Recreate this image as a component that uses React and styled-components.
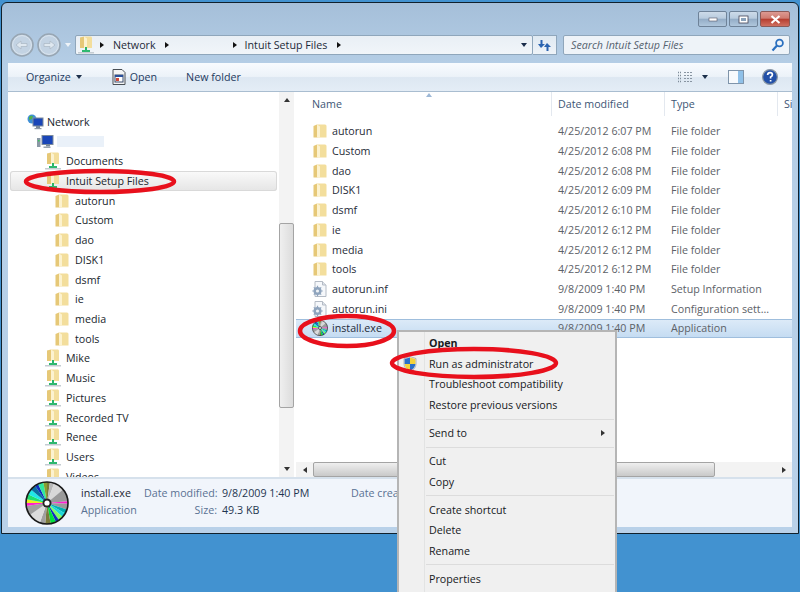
import React from 'react';
import styled, { createGlobalStyle } from 'styled-components';

const Global = createGlobalStyle`
  html, body {
    margin: 0;
    padding: 0;
    height: 592px;
    overflow: hidden;
    background: #4292d0;
    font-family: "Open Sans", "Noto Sans", sans-serif;
    font-size: 10.7px;
    color: #1e2a3a;
  }
`;

const Desktop = styled.div`
  position: relative;
  width: 800px;
  height: 592px;
  padding: 2px 0 0 1px;
  box-sizing: border-box;
  overflow: hidden;
`;

const Window = styled.div`
  width: 798px;
  height: 532px;
  box-sizing: border-box;
  border: 1px solid #10202c;
  border-radius: 6px 6px 0 0;
  padding: 0 6px 6px 6px;
  display: flex;
  flex-direction: column;
  background: linear-gradient(180deg, #a5bfd9 0%, #b5cee6 12%, #b9d1e9 100%);
`;

const TitleBar = styled.div`
  height: 27px;
  display: flex;
  justify-content: flex-end;
  align-items: flex-start;
  padding: 8px 2px 0 0;
  gap: 2px;
  box-sizing: border-box;
  flex: none;
`;

const Caption = styled.div`
  width: ${(p) => (p.$close ? 30 : 29)}px;
  height: 16px;
  border: 1px solid ${(p) => (p.$close ? '#8a5a58' : '#6e8298')};
  border-radius: 2px;
  box-sizing: border-box;
  display: flex;
  align-items: center;
  justify-content: center;
  background: ${(p) =>
    p.$close
      ? 'linear-gradient(180deg, #dc9a92 0%, #cf7b70 45%, #b53d2f 50%, #cf6f60 100%)'
      : 'linear-gradient(180deg, #cddbe9 0%, #b8cbde 45%, #93acc6 50%, #afc6dc 100%)'};
`;

const NavBar = styled.div`
  height: 30px;
  display: flex;
  align-items: center;
  flex: none;
`;

const NavButtons = styled.div`
  display: flex;
  align-items: center;
  width: 65px;
  margin-left: 2px;
  flex: none;
`;

const AddressBox = styled.div`
  width: 458px;
  height: 20px;
  box-sizing: border-box;
  border: 1px solid #8fa6bb;
  border-radius: 2px;
  background: linear-gradient(180deg, #e9eff5, #f1f5f9);
  display: flex;
  align-items: center;
  padding: 0 5px 0 2px;
  flex: none;
`;

const Crumb = styled.span`
  color: #1d2a38;
  white-space: nowrap;
  margin-left: ${(p) => p.$gap || 0}px;
`;

const Chevron = styled.i`
  display: inline-block;
  width: 0;
  height: 0;
  border-left: 4px solid #111;
  border-top: 3.5px solid transparent;
  border-bottom: 3.5px solid transparent;
  margin-left: ${(p) => p.$gap || 0}px;
`;

const DropCaret = styled.i`
  display: inline-block;
  width: 0;
  height: 0;
  border-top: 4px solid ${(p) => p.$color || '#1c2f4a'};
  border-left: 3.5px solid transparent;
  border-right: 3.5px solid transparent;
  margin-left: ${(p) => p.$gap || 0}px;
`;

const AddressCaret = styled(DropCaret)`
  margin-left: auto;
`;

const RefreshBox = styled.div`
  width: 24px;
  height: 20px;
  box-sizing: border-box;
  border: 1px solid #8fa6bb;
  border-left: 0;
  background: linear-gradient(180deg, #dfe9f2, #eef3f8);
  display: flex;
  align-items: center;
  justify-content: center;
  flex: none;
`;

const SearchBox = styled.div`
  width: 227px;
  height: 20px;
  margin-left: 6px;
  box-sizing: border-box;
  border: 1px solid #8fa6bb;
  border-radius: 2px;
  background: #eef3f8;
  color: #55626f;
  font-style: italic;
  white-space: nowrap;
  display: flex;
  align-items: center;
  justify-content: space-between;
  padding: 0 4px 0 7px;
  flex: none;
`;

const Toolbar = styled.div`
  height: 29px;
  flex: none;
  margin-top: 3px;
  box-sizing: border-box;
  border-bottom: 1px solid #a9bdd0;
  background: linear-gradient(180deg, #f8fbfe 0%, #ecf2f9 48%, #dde7f2 52%, #e4edf6 100%);
  display: flex;
  align-items: center;
  padding: 0 14px 0 18px;
  color: #1e3a5f;
  white-space: nowrap;
`;

const ToolItem = styled.div`
  display: flex;
  align-items: center;
  gap: ${(p) => p.$gap || 0}px;
  margin-left: ${(p) => (p.$auto ? 'auto' : `${p.$left || 0}px`)};
`;

const Main = styled.div`
  flex: 1;
  min-height: 0;
  display: flex;
  background: #fff;
  overflow: hidden;
`;

const TreePane = styled.div`
  width: 271px;
  flex: none;
  padding: 20px 2px 0 2px;
  box-sizing: border-box;
  overflow: hidden;
`;

const TreeRow = styled.div`
  height: 19.72px;
  display: flex;
  align-items: center;
  padding-left: ${(p) => p.$indent}px;
  gap: ${(p) => p.$gap || 5}px;
  box-sizing: border-box;
  white-space: nowrap;
  color: #20262d;
  ${(p) =>
    p.$active &&
    `
    box-shadow: inset 0 0 0 1px #d9d9d9;
    border-radius: 3px;
    background: linear-gradient(180deg, #fafafa, #e5e5e5);
  `}
`;

const Hidden = styled.div`
  width: 47px;
  height: 11px;
  background: #eaf1f9;
`;

const VScroll = styled.div`
  width: 15px;
  flex: none;
  background: #f3f3f3;
  display: flex;
  flex-direction: column;
  align-items: center;
  justify-content: space-between;
  padding: 6px 0;
  box-sizing: border-box;
  position: relative;
`;

const VThumb = styled.div`
  position: absolute;
  top: 131px;
  left: 0;
  width: 15px;
  height: 185px;
  box-sizing: border-box;
  border: 1px solid #a4a4a4;
  border-radius: 2px;
  background: linear-gradient(90deg, #efefef, #dcdcdc);
`;

const ListPane = styled.div`
  flex: 1;
  min-width: 0;
  margin-left: 2px;
  display: flex;
  flex-direction: column;
  position: relative;
`;

const HeaderRow = styled.div`
  height: 24px;
  flex: none;
  display: flex;
  color: #3d5675;
  position: relative;
`;

const HeaderCell = styled.div`
  width: ${(p) => p.$w}px;
  padding-left: ${(p) => p.$pad}px;
  box-sizing: border-box;
  display: flex;
  align-items: center;
  flex: none;
  border-right: ${(p) => (p.$last ? '0' : '1px solid #e3e8ef')};
  white-space: nowrap;
`;

const SortMark = styled.i`
  position: absolute;
  left: 130px;
  top: 1px;
  width: 0;
  height: 0;
  border-bottom: 4px solid #9db8d6;
  border-left: 3.5px solid transparent;
  border-right: 3.5px solid transparent;
`;

const Rows = styled.div`
  flex: 1;
  padding-top: 5.4px;
`;

const FileRow = styled.div`
  height: 19.72px;
  display: flex;
  align-items: center;
  box-sizing: border-box;
  white-space: nowrap;
  padding-left: 14px;
  ${(p) =>
    p.$selected &&
    `
    background: linear-gradient(180deg, #dceaf8, #c5dcf2);
    border-top: 1px solid #9fbedd;
    border-bottom: 1px solid #9fbedd;
  `}
`;

const NameCell = styled.div`
  width: 242px;
  padding-left: 2px;
  display: flex;
  align-items: center;
  gap: 4px;
  box-sizing: border-box;
  color: #1f2b38;
  flex: none;
`;

const MetaCell = styled.div`
  width: ${(p) => p.$w}px;
  padding-left: 6px;
  box-sizing: border-box;
  color: #5c6167;
  flex: none;
`;

const HScroll = styled.div`
  height: 15px;
  flex: none;
  background: #f3f3f3;
  display: flex;
  align-items: center;
  justify-content: space-between;
  padding: 0 6px 0 7px;
  box-sizing: border-box;
  position: relative;
`;

const HThumb = styled.div`
  position: absolute;
  left: 17px;
  top: 0;
  width: 402px;
  height: 15px;
  box-sizing: border-box;
  border: 1px solid #a4a4a4;
  border-radius: 2px;
  background: linear-gradient(180deg, #efefef, #c9c9c9);
`;

const Arrow = styled.i`
  display: block;
  width: 0;
  height: 0;
  ${(p) =>
    p.$dir === 'up' &&
    'border-bottom: 4px solid #333; border-left: 3.5px solid transparent; border-right: 3.5px solid transparent;'}
  ${(p) =>
    p.$dir === 'down' &&
    'border-top: 4px solid #333; border-left: 3.5px solid transparent; border-right: 3.5px solid transparent;'}
  ${(p) =>
    p.$dir === 'left' &&
    'border-right: 4px solid #333; border-top: 3.5px solid transparent; border-bottom: 3.5px solid transparent;'}
  ${(p) =>
    p.$dir === 'right' &&
    'border-left: 4px solid #333; border-top: 3.5px solid transparent; border-bottom: 3.5px solid transparent;'}
`;

const Details = styled.div`
  height: 50px;
  flex: none;
  box-sizing: border-box;
  border-top: 2px solid #d6e1ec;
  background: #f1f5fb;
  display: flex;
  align-items: center;
  padding-left: 17px;
`;

const DetailsGrid = styled.div`
  display: grid;
  grid-template-columns: 63px 78px 129px auto;
  grid-auto-rows: 17px;
  margin: -4px 0 0 12px;
  align-items: center;
  white-space: nowrap;
`;

const DetailName = styled.div`
  color: ${(p) => (p.$muted ? '#5a7293' : '#1c2733')};
`;

const DetailLabel = styled.div`
  color: #5a7293;
  text-align: ${(p) => (p.$left ? 'left' : 'right')};
  padding-right: ${(p) => (p.$left ? 0 : 5)}px;
`;

const DetailValue = styled.div`
  color: #1f3550;
`;

const Menu = styled.div`
  position: absolute;
  left: 397px;
  top: 330px;
  width: 220px;
  height: 270px;
  box-sizing: border-box;
  border: 2px solid #b5b5b5;
  border-bottom: 0;
  background: #f0f0f0;
  padding-top: 1px;
  color: #16191d;
  &::before {
    content: '';
    position: absolute;
    left: 25px;
    top: 0;
    bottom: 0;
    width: 1px;
    background: #e2e3e3;
  }
`;

const MenuItem = styled.div`
  height: 20.6px;
  display: flex;
  align-items: center;
  padding-left: 30px;
  position: relative;
  white-space: nowrap;
  font-weight: ${(p) => (p.$bold ? 700 : 400)};
`;

const MenuGap = styled.div`
  height: 7.4px;
  display: flex;
  align-items: center;
  margin: 0 1px 0 27px;
  &::after {
    content: '';
    flex: 1;
    height: 1px;
    background: #dcdcdc;
  }
`;

const MenuIcon = styled.span`
  position: absolute;
  left: 4px;
  top: 2px;
  display: flex;
`;

const MenuArrow = styled.span`
  position: absolute;
  right: 10px;
  top: 7px;
`;

const Marks = styled.svg`
  position: absolute;
  left: 0;
  top: 0;
  pointer-events: none;
`;

function FolderIcon() {
  return (
    <svg width="16" height="16" viewBox="0 0 16 16" style={{ flex: 'none' }}>
      <path d="M1.5 3 L5 1.5 L5.5 14.5 L1.5 14.5 Z" fill="#e6c877" />
      <path d="M5 1.5 H13 Q14.5 1.5 14.5 3 V14.5 H5 Z" fill="#f3de9c" />
      <path d="M5 1.5 L8 3.5 V14.5 H5 Z" fill="#fcf2cf" />
    </svg>
  );
}

function SharedFolderIcon() {
  return (
    <svg width="16" height="18" viewBox="0 0 16 18" style={{ flex: 'none' }}>
      <path d="M2 1.5 L6 0.5 L6 12 L2 12 Z" fill="#e6c877" />
      <path d="M6 .5 H13 Q14 .5 14 2 V12 H6 Z" fill="#f3de9c" />
      <path d="M6 .5 L9 2.5 V12 H6 Z" fill="#fcf2cf" />
      <rect x="7" y="11" width="2" height="3" fill="#2cb569" />
      <path d="M4 14 H12 V16 H4 Z" fill="#2fb870" />
      <rect x="0" y="16" width="16" height="1.5" fill="#c4ccd2" />
    </svg>
  );
}

function GearFileIcon() {
  return (
    <svg width="16" height="16" viewBox="0 0 16 16" style={{ flex: 'none' }}>
      <path d="M3 .5 H10.5 L14 4 V15.5 H3 Z" fill="#f6f8fb" stroke="#b4bbc5" />
      <path d="M10.5 .5 V4 H14" fill="#dfe5ec" stroke="#b4bbc5" />
      <circle cx="5.5" cy="10" r="4" fill="#8fa4bd" />
      <path d="M5.5 4.8 V15.2 M.3 10 H10.7 M1.8 6.3 L9.2 13.7 M9.2 6.3 L1.8 13.7" stroke="#8fa4bd" strokeWidth="1.2" />
      <circle cx="5.5" cy="10" r="1.6" fill="#eef2f6" />
    </svg>
  );
}

const wedges = [
  ['#7a7a3a', 0, 8],
  ['#b8b8b8', 8, 20],
  ['#d8d8d8', 20, 50],
  ['#9a9a9a', 50, 85],
  ['#ff20d0', 85, 92],
  ['#9a9a9a', 92, 108],
  ['#00b0b0', 108, 120],
  ['#20d8d8', 120, 132],
  ['#80ff60', 132, 145],
  ['#1030c0', 145, 155],
  ['#00e040', 155, 170],
  ['#7a7a3a', 170, 185],
  ['#a0a0a0', 185, 200],
  ['#dcdcdc', 200, 235],
  ['#a0a0a0', 235, 262],
  ['#ff20d0', 262, 270],
  ['#e8f020', 270, 280],
  ['#20e070', 280, 295],
  ['#20e8e8', 295, 310],
  ['#0a70a0', 310, 325],
  ['#1030c0', 325, 335],
  ['#30e8a0', 335, 350],
  ['#88a030', 350, 360],
];

function wedge(r, a, b) {
  const p = (d) => {
    const t = ((d - 90) * Math.PI) / 180;
    return `${(r * Math.cos(t)).toFixed(2)} ${(r * Math.sin(t)).toFixed(2)}`;
  };
  return `M0 0 L${p(a)} A${r} ${r} 0 0 1 ${p(b)} Z`;
}

function Disc({ size }) {
  return (
    <svg width={size} height={size} viewBox="-22 -22 44 44" style={{ flex: 'none' }}>
      {wedges.map(([c, a, b]) => (
        <path key={a} d={wedge(21, a, b)} fill={c} />
      ))}
      <circle r="21" fill="none" stroke="#1a1a1a" strokeWidth="1.6" />
      <circle r="4.5" fill="#222" />
      <circle r="2.6" fill="#fff" />
    </svg>
  );
}

function NetworkIcon() {
  return (
    <svg width="17" height="16" viewBox="0 0 17 16" style={{ flex: 'none' }}>
      <circle cx="5" cy="5" r="4.5" fill="#3f8fd6" />
      <path d="M2 3 Q4 1 6 2 L5 5 L2 6 Z" fill="#4fb04a" />
      <rect x="6" y="4" width="10" height="8" fill="#1a46b8" stroke="#7b8a9b" />
      <rect x="9" y="12" width="4" height="2" fill="#7b8a9b" />
      <rect x="7.5" y="14" width="7" height="1.2" fill="#8d99a7" />
    </svg>
  );
}

function HostIcon() {
  return (
    <svg width="17" height="14" viewBox="0 0 17 14" style={{ flex: 'none' }}>
      <rect x="0" y="3" width="3.5" height="9" fill="#8a98a5" />
      <rect x="1" y="5" width="1.5" height="1.5" fill="#35c65a" />
      <rect x="5" y="0.5" width="11" height="9" fill="#1a46b8" stroke="#7b8a9b" />
      <rect x="9" y="9.5" width="4" height="2" fill="#7b8a9b" />
      <rect x="6.5" y="11.5" width="7" height="1.5" fill="#99a4af" />
    </svg>
  );
}

function NavCircle({ dir }) {
  return (
    <svg width="24" height="24" viewBox="0 0 24 24" style={{ marginRight: dir === 'l' ? 3 : 0, flex: 'none' }}>
      <circle cx="12" cy="12" r="11" fill="#c3d3e3" stroke="#98a6b3" strokeWidth="1.6" />
      <circle cx="12" cy="12" r="9.4" fill="none" stroke="#dbe5ee" strokeWidth="1" />
      <path d={dir === 'l' ? 'M17 10.5 H11 V8 L6 12 L11 16 V13.5 H17 Z' : 'M7 10.5 H13 V8 L18 12 L13 16 V13.5 H7 Z'} fill="#dfe8f0" stroke="#a9b6c3" strokeWidth=".7" />
    </svg>
  );
}

function ShieldIcon() {
  return (
    <svg width="14" height="16" viewBox="0 0 14 16">
      <path d="M7 .5 L13 2.5 V8 Q13 13 7 15.5 Q1 13 1 8 V2.5 Z" fill="#e8ecf0" stroke="#8a8f96" strokeWidth=".6" />
      <path d="M7 1.5 V8 H1.6 V3 Z" fill="#2a6fc9" />
      <path d="M7 8 H12.4 Q12 12.6 7 14.8 Z" fill="#2a6fc9" />
      <path d="M7 1.5 L12.4 3 V8 H7 Z" fill="#f4d23a" />
      <path d="M7 8 V14.8 Q2 12.6 1.6 8 Z" fill="#f4d23a" />
    </svg>
  );
}

const tree = [
  { k: 'net', label: 'Network', indent: 17, gap: 3, icon: <NetworkIcon /> },
  { k: 'host', indent: 27, gap: 3, icon: <HostIcon />, hidden: true },
  { k: 'Documents', label: 'Documents', indent: 35, icon: <SharedFolderIcon /> },
  { k: 'Intuit', label: 'Intuit Setup Files', indent: 35, icon: <SharedFolderIcon />, active: true },
  ...['autorun', 'Custom', 'dao', 'DISK1', 'dsmf', 'ie', 'media', 'tools'].map((f) => ({
    k: 'sub' + f,
    label: f,
    indent: 44,
    icon: <FolderIcon />,
  })),
  ...['Mike', 'Music', 'Pictures', 'Recorded TV', 'Renee', 'Users', 'Videos'].map((f) => ({
    k: f,
    label: f,
    indent: 35,
    icon: <SharedFolderIcon />,
  })),
];

const files = [
  ['autorun', '4/25/2012 6:07 PM', 'File folder'],
  ['Custom', '4/25/2012 6:08 PM', 'File folder'],
  ['dao', '4/25/2012 6:08 PM', 'File folder'],
  ['DISK1', '4/25/2012 6:09 PM', 'File folder'],
  ['dsmf', '4/25/2012 6:10 PM', 'File folder'],
  ['ie', '4/25/2012 6:12 PM', 'File folder'],
  ['media', '4/25/2012 6:12 PM', 'File folder'],
  ['tools', '4/25/2012 6:12 PM', 'File folder'],
  ['autorun.inf', '9/8/2009 1:40 PM', 'Setup Information', 'gear'],
  ['autorun.ini', '9/8/2009 1:40 PM', 'Configuration sett...', 'gear'],
  ['install.exe', '9/8/2009 1:40 PM', 'Application', 'disc'],
];

function fileIcon(kind) {
  if (kind === 'gear') return <GearFileIcon />;
  if (kind === 'disc') return <Disc size={16} />;
  return <FolderIcon />;
}

export default function App() {
  return (
    <Desktop>
      <Global />
      <Window>
        <TitleBar>
          <Caption>
            <svg width="10" height="5"><rect x="1" y="1" width="8" height="3" fill="#fff" stroke="#556" strokeWidth=".6" /></svg>
          </Caption>
          <Caption>
            <svg width="11" height="9"><rect x="1" y="1" width="9" height="7" fill="#fff" stroke="#445" strokeWidth=".8" /><rect x="3" y="3" width="5" height="3" fill="#8aa2ba" /></svg>
          </Caption>
          <Caption $close>
            <svg width="11" height="9"><path d="M1.5 1 L9.5 8 M9.5 1 L1.5 8" stroke="#fff" strokeWidth="2.2" /></svg>
          </Caption>
        </TitleBar>
        <NavBar>
          <NavButtons>
            <NavCircle dir="l" />
            <NavCircle dir="r" />
            <DropCaret $color="#eef3f8" $gap={4} />
          </NavButtons>
          <AddressBox>
            <SharedFolderIcon />
            <Chevron $gap={6} />
            <Crumb $gap={9}>Network</Crumb>
            <Chevron $gap={9} />
            <Chevron $gap={64} />
            <Crumb $gap={8}>Intuit Setup Files</Crumb>
            <Chevron $gap={10} />
            <AddressCaret $color="#1a2c4a" />
          </AddressBox>
          <RefreshBox>
            <svg width="15" height="13" viewBox="0 0 15 13">
              <path d="M5 1 L1 5 H3.5 V9 H5.5 V5 H8 Z" fill="#2a63b0" transform="rotate(180 4.5 5)" />
              <path d="M10 4 L14 8 H11.5 V12 H9.5 V8 H7 Z" fill="#2a63b0" />
            </svg>
          </RefreshBox>
          <SearchBox>
            Search Intuit Setup Files
            <svg width="14" height="14" viewBox="0 0 14 14">
              <circle cx="8.5" cy="5" r="3.4" fill="none" stroke="#2a6fbf" strokeWidth="1.8" />
              <path d="M6 7.6 L1.5 12.5" stroke="#2a6fbf" strokeWidth="2.2" />
            </svg>
          </SearchBox>
        </NavBar>
        <Toolbar>
          <ToolItem $gap={5}>
            Organize <DropCaret />
          </ToolItem>
          <ToolItem $left={30} $gap={4}>
            <svg width="14" height="16" viewBox="0 0 14 16">
              <path d="M1 .5 H10 L13 3.5 V15.5 H1 Z" fill="#f4f4f4" stroke="#4a4f55" />
              <rect x="3" y="6" width="8" height="7" fill="#fff" stroke="#394a6a" />
              <rect x="3" y="6" width="8" height="2" fill="#2a4f9a" />
              <rect x="4" y="9" width="3" height="3" fill="#d14a3a" />
            </svg>
            Open
          </ToolItem>
          <ToolItem $left={29}>New folder</ToolItem>
          <ToolItem $auto $gap={9}>
            <svg width="15" height="12" viewBox="0 0 15 12">
              <path d="M0 1.5 H4 M0 4.5 H4 M0 7.5 H4 M0 10.5 H4" stroke="#7e8b99" strokeWidth="1.4" strokeDasharray="1 1" />
              <path d="M6 1.5 H15 M6 4.5 H15 M6 7.5 H15 M6 10.5 H15" stroke="#8995a2" strokeWidth="1" strokeDasharray="2 1" />
            </svg>
            <DropCaret />
          </ToolItem>
          <ToolItem $left={20}>
            <svg width="16" height="14" viewBox="0 0 16 14">
              <rect x=".5" y=".5" width="15" height="13" fill="#f7fafd" stroke="#7f94aa" />
              <rect x="10" y="1" width="5" height="12" fill="#8fc0e8" />
            </svg>
          </ToolItem>
          <ToolItem $left={18}>
            <svg width="16" height="16" viewBox="0 0 16 16">
              <circle cx="8" cy="8" r="7.4" fill="#2350a8" stroke="#8c98a4" strokeWidth="1.2" />
              <path d="M5.6 6 Q5.8 3.6 8 3.6 Q10.4 3.6 10.4 5.8 Q10.4 7.2 8.6 8 V9.4 M8.6 11 V12.6" stroke="#fff" strokeWidth="1.7" fill="none" />
            </svg>
          </ToolItem>
        </Toolbar>
        <Main>
          <TreePane>
            {tree.map((t) => (
              <TreeRow key={t.k} $indent={t.indent} $gap={t.gap} $active={t.active}>
                {t.icon}
                {t.hidden ? <Hidden /> : t.label}
              </TreeRow>
            ))}
          </TreePane>
          <VScroll>
            <Arrow $dir="up" />
            <VThumb />
            <Arrow $dir="down" />
          </VScroll>
          <ListPane>
            <HeaderRow>
              <SortMark />
              <HeaderCell $w={256} $pad={16}>Name</HeaderCell>
              <HeaderCell $w={113} $pad={6}>Date modified</HeaderCell>
              <HeaderCell $w={113} $pad={6}>Type</HeaderCell>
              <HeaderCell $w={14} $pad={6} $last>Si</HeaderCell>
            </HeaderRow>
            <Rows>
              {files.map(([name, date, type, kind]) => (
                <FileRow key={name} $selected={kind === 'disc'}>
                  <NameCell>
                    {fileIcon(kind)}
                    {name}
                  </NameCell>
                  <MetaCell $w={113}>{date}</MetaCell>
                  <MetaCell $w={113}>{type}</MetaCell>
                </FileRow>
              ))}
            </Rows>
            <HScroll>
              <Arrow $dir="left" />
              <HThumb />
              <Arrow $dir="right" />
            </HScroll>
          </ListPane>
        </Main>
        <Details>
          <Disc size={44} />
          <DetailsGrid>
            <DetailName>install.exe</DetailName>
            <DetailLabel>Date modified:</DetailLabel>
            <DetailValue>9/8/2009 1:40 PM</DetailValue>
            <DetailLabel $left>Date created:</DetailLabel>
            <DetailName $muted>Application</DetailName>
            <DetailLabel>Size:</DetailLabel>
            <DetailValue>49.3 KB</DetailValue>
          </DetailsGrid>
        </Details>
      </Window>
      <Menu>
        <MenuItem $bold>Open</MenuItem>
        <MenuItem>
          <MenuIcon><ShieldIcon /></MenuIcon>
          Run as administrator
        </MenuItem>
        <MenuItem>Troubleshoot compatibility</MenuItem>
        <MenuItem>Restore previous versions</MenuItem>
        <MenuGap />
        <MenuItem>
          Send to
          <MenuArrow><Arrow $dir="right" /></MenuArrow>
        </MenuItem>
        <MenuGap />
        <MenuItem>Cut</MenuItem>
        <MenuItem>Copy</MenuItem>
        <MenuGap />
        <MenuItem>Create shortcut</MenuItem>
        <MenuItem>Delete</MenuItem>
        <MenuItem>Rename</MenuItem>
        <MenuGap />
        <MenuItem>Properties</MenuItem>
      </Menu>
      <Marks width="800" height="592">
        <g fill="none" stroke="#e8101c" strokeWidth="4.5">
          <ellipse cx="100" cy="181.5" rx="74" ry="10.5" />
          <ellipse cx="347" cy="331" rx="47" ry="15" />
          <ellipse cx="474" cy="363" rx="82" ry="14" />
        </g>
      </Marks>
    </Desktop>
  );
}
